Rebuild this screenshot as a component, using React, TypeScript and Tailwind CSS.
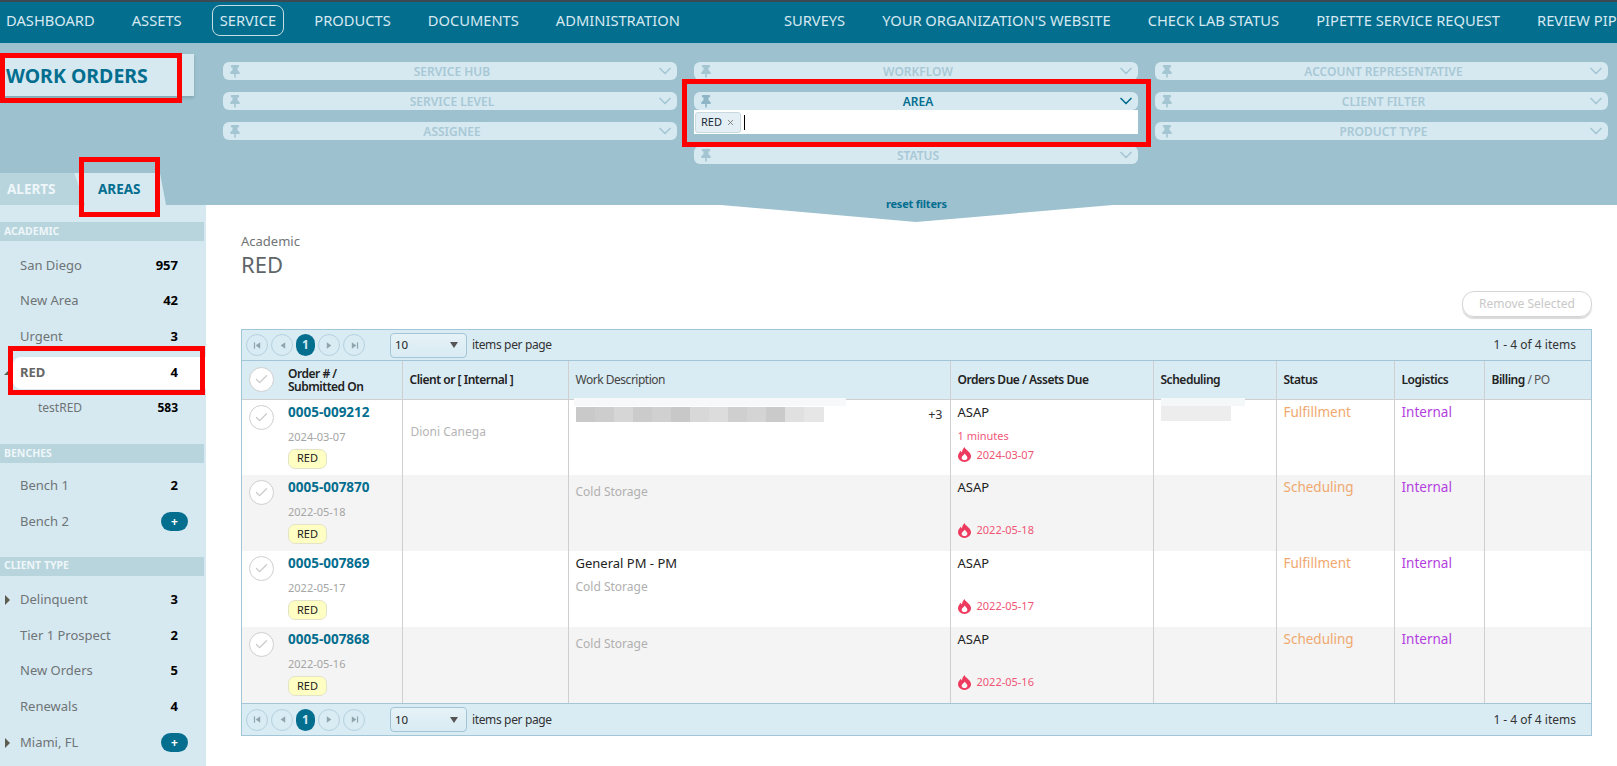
import { ChevronDown, Check, X } from "lucide-react"
import { FaThumbtack } from "react-icons/fa"

const navLeft = ["DASHBOARD", "ASSETS", "SERVICE", "PRODUCTS", "DOCUMENTS", "ADMINISTRATION"]
const navRight = ["SURVEYS", "YOUR ORGANIZATION'S WEBSITE", "CHECK LAB STATUS", "PIPETTE SERVICE REQUEST", "REVIEW PIPETTE"]

const Filter = ({ label, active }: { label: string; active?: boolean }) => (
  <div className="flex h-[18px] items-center rounded-[6px] bg-[#d6e9f1] pl-[7px] pr-[2px]">
    <FaThumbtack className={`h-[13px] w-[10px] ${active ? "text-[#8db5c6]" : "text-[#a4c6d3]"}`} />
    <span className={`flex-1 pl-[9px] pt-[1px] text-center text-[12px] font-semibold leading-none ${active ? "text-[#046e8f]" : "text-[#a8c8d5]"}`}>{label}</span>
    <ChevronDown className={`-my-[4px] h-[20px] w-[20px] ${active ? "text-[#046e8f]" : "text-[#a4c6d3]"}`} strokeWidth={2} />
  </div>
)

const SectionHeader = ({ label }: { label: string }) => (
  <div className="mr-[2px] flex h-[19px] items-center bg-[#b8d5dd] pl-[4px] text-[10.5px] font-bold text-[#eef6f9]">{label}</div>
)

const SideRow = ({ label, count, arrow, plus }: { label: string; count?: string; arrow?: boolean; plus?: boolean }) => (
  <div className="relative flex h-[35.75px] items-center pl-[20px] pr-[28px] text-[13px] text-[#6f7476]">
    {arrow && <span className="absolute left-[5px] h-0 w-0 border-y-[5px] border-l-[5px] border-y-transparent border-l-[#5d5d50]" />}
    <span className="flex-1">{label}</span>
    {plus ? (
      <span className="-mr-[10px] flex h-[19px] w-[27px] items-center justify-center rounded-full bg-[#046e8f] text-[12px] font-bold leading-none text-white">+</span>
    ) : (
      <span className="text-[13px] font-bold text-black">{count}</span>
    )}
  </div>
)

const CircleCheck = () => (
  <span className="flex h-[25px] w-[25px] shrink-0 items-center justify-center rounded-full border border-[#cfcfcf] bg-white">
    <Check className="h-[15px] w-[15px] text-[#c9c9c9]" strokeWidth={2} />
  </span>
)

const Flame = () => (
  <svg viewBox="0 0 14 16" className="h-[15px] w-[13px] text-[#ee3a5e]">
    <path
      fill="currentColor"
      fillRule="evenodd"
      d="M7 0C7.500 2 9 2.500 11 4.500 13 6.300 14 8 14 10 14 13.300 10.900 16 7 16 3.100 16 0 13.300 0 10 0 7.500 1.500 5.500 3 4 3.300 5 3.700 5.500 4.300 5.800 4.500 3.500 5.500 1.500 7 0ZM7.300 6.800C6.800 8.500 3.900 9.400 3.900 11.400 3.900 13 5.300 14 7 14 8.700 14 10.100 13 10.100 11.400 10.100 9.400 7.800 8.500 7.300 6.800Z"
    />
  </svg>
)

const PagerIcon = ({ dir, bar }: { dir: "l" | "r"; bar?: boolean }) => (
  <span className="flex h-[22px] w-[22px] items-center justify-center rounded-full border border-[#b4d2df]">
    <svg viewBox="0 0 10 10" className="h-[9px] w-[9px] text-[#8fa5ae]">
      {dir === "l" ? <path fill="currentColor" d="M8 1.500v7L3 5z" /> : <path fill="currentColor" d="M2 1.500v7L7 5z" />}
      {bar && (dir === "l" ? <rect x="1" y="1.500" width="1.300" height="7" fill="currentColor" /> : <rect x="7.700" y="1.500" width="1.300" height="7" fill="currentColor" />)}
    </svg>
  </span>
)

const Pager = ({ className }: { className: string }) => (
  <div className={`flex items-center bg-[#d9ebf3] pl-[4px] pr-[15px] ${className}`}>
    <div className="flex items-center gap-[3px]">
      <PagerIcon dir="l" bar />
      <PagerIcon dir="l" />
      <span className="flex h-[22px] w-[19px] items-center justify-center rounded-full bg-[#046e8f] text-[12px] font-bold text-[#d6e9f1]">1</span>
      <PagerIcon dir="r" />
      <PagerIcon dir="r" bar />
    </div>
    <div className="ml-[25px] flex h-[25px] w-[77px] items-center justify-between rounded-[4px] border border-[#a2c6d8] bg-gradient-to-b from-[#e6f2f7] to-[#d9ebf3] pl-[4px] pr-[8px] text-[11.5px] text-[#222]">
      10
      <span className="h-0 w-0 border-x-[4px] border-t-[6px] border-x-transparent border-t-[#555]" />
    </div>
    <span className="ml-[5px] flex-1 text-[12px] tracking-[-0.03em] text-[#333]">items per page</span>
    <span className="text-[12px] text-[#333]">1 - 4 of 4 items</span>
  </div>
)

interface Order {
  id: string
  date: string
  client?: string
  title?: string
  desc?: string
  minutes?: string
  status: string
  blurred?: boolean
}

const orders: Order[] = [
  { id: "0005-009212", date: "2024-03-07", client: "Dioni Canega", minutes: "1 minutes", status: "Fulfillment", blurred: true },
  { id: "0005-007870", date: "2022-05-18", desc: "Cold Storage", status: "Scheduling" },
  { id: "0005-007869", date: "2022-05-17", title: "General PM - PM", desc: "Cold Storage", status: "Fulfillment" },
  { id: "0005-007868", date: "2022-05-16", desc: "Cold Storage", status: "Scheduling" },
]

const blurSteps = ["bg-[#c9c9c9]", "bg-[#cdcdcd]", "bg-[#d6d6d6]", "bg-[#cbcbcb]", "bg-[#d0d0d0]", "bg-[#c8c8c8]", "bg-[#d8d8d8]", "bg-[#dcdcdc]", "bg-[#cfcfcf]", "bg-[#d4d4d4]", "bg-[#cacaca]", "bg-[#e0e0e0]", "bg-[#e6e6e6]"]

const App = () => {
  return (
    <div className="relative h-[766px] w-full overflow-hidden bg-white font-['Noto_Sans',sans-serif]">
      {/* Top nav */}
      <nav className="flex h-[43px] items-center overflow-hidden whitespace-nowrap border-t-2 border-[#3b4a52] bg-[#046e8f] pb-[4px] pl-[6px] text-[14.7px] text-[#d6e9f1]">
        <div className="flex items-center gap-[37px]">
          {navLeft.map((n) =>
            n === "SERVICE" ? (
              <span key={n} className="-mx-[7px] rounded-[8px] border border-[#c5dde6] px-[7px] py-[3px]">{n}</span>
            ) : (
              <span key={n}>{n}</span>
            )
          )}
        </div>
        <div className="ml-[104px] flex items-center gap-[37px]">
          {navRight.map((n) => (
            <span key={n}>{n}</span>
          ))}
        </div>
      </nav>

      {/* Filter band */}
      <div className="flex h-[162px] bg-[#9dc1cf]">
        <div className="flex w-[223px] shrink-0 flex-col justify-between pt-[11px]">
          <div className="flex h-[42px] w-[194px] items-center bg-[#d6e9f1] pl-[6px] pt-[1px] text-[19.5px] font-bold text-[#046e8f] shadow-[0_2px_3px_rgba(0,0,0,0.15)]">
            WORK ORDERS
          </div>
          <div className="flex h-[32px] text-[13.5px] font-bold">
            <div className="flex w-[85px] items-center bg-[#b8d5dd] pl-[7px] text-[#eef6f9] [clip-path:polygon(0_0,74px_0,85px_100%,0_100%)]">ALERTS</div>
            <div className="-ml-[11px] flex w-[92px] items-center bg-[#d6e9f1] pl-[24px] text-[#046e8f] [clip-path:polygon(0_0,86px_0,92px_100%,11px_100%)]">AREAS</div>
          </div>
        </div>
        <div className="grid grid-cols-[454px_444px_453px] items-start gap-x-[17px] pt-[19px]">
          <div className="flex flex-col gap-[12px]">
            <Filter label="SERVICE HUB" />
            <Filter label="SERVICE LEVEL" />
            <Filter label="ASSIGNEE" />
          </div>
          <div className="flex flex-col">
            <Filter label="WORKFLOW" />
            <div className="mt-[12px]">
              <Filter label="AREA" active />
              <div className="flex h-[24px] items-center bg-white pl-[1px]">
                <span className="flex h-[21px] items-center gap-[4px] rounded-[3px] border border-[#c9d9e0] bg-[#e3eff4] px-[5px] text-[11px] text-[#1c2b3a]">
                  RED
                  <X className="h-[9px] w-[9px] text-[#666]" strokeWidth={2} />
                </span>
                <span className="ml-[3px] h-[15px] w-px bg-black" />
              </div>
            </div>
            <div className="mt-[12px]">
              <Filter label="STATUS" />
            </div>
          </div>
          <div className="flex flex-col gap-[12px]">
            <Filter label="ACCOUNT REPRESENTATIVE" />
            <Filter label="CLIENT FILTER" />
            <Filter label="PRODUCT TYPE" />
          </div>
        </div>
      </div>

      {/* Body */}
      <div className="flex h-[561px]">
        <aside className="w-[206px] shrink-0 bg-[#d6e9f1] pt-[17px]">
          <SectionHeader label="ACADEMIC" />
          <div className="pt-[6.5px]">
            <SideRow label="San Diego" count="957" />
            <SideRow label="New Area" count="42" />
            <SideRow label="Urgent" count="3" />
            <div className="flex h-[35.75px] items-center">
              <div className="relative ml-[13px] flex h-[32px] flex-1 items-center rounded-l-[8px] bg-white pl-[7px] pr-[28px] text-[13px] font-bold text-[#666]">
                <span className="absolute -left-[9px] h-0 w-0 border-b-[5px] border-l-[5px] border-b-[#5d5d50] border-l-transparent" />
                <span className="flex-1">RED</span>
                <span className="text-[13px] font-bold text-black">4</span>
              </div>
            </div>
            <div className="flex h-[35.75px] items-center pl-[38px] pr-[28px] text-[12px] text-[#6f7476]">
              <span className="flex-1">testRED</span>
              <span className="font-bold text-black">583</span>
            </div>
          </div>
          <div className="mt-[18px]">
            <SectionHeader label="BENCHES" />
          </div>
          <div className="pt-[5px]">
            <SideRow label="Bench 1" count="2" />
            <SideRow label="Bench 2" plus />
          </div>
          <div className="mt-[17px]">
            <SectionHeader label="CLIENT TYPE" />
          </div>
          <div className="pt-[6px]">
            <SideRow label="Delinquent" count="3" arrow />
            <SideRow label="Tier 1 Prospect" count="2" />
            <SideRow label="New Orders" count="5" />
            <SideRow label="Renewals" count="4" />
            <SideRow label="Miami, FL" arrow plus />
          </div>
        </aside>

        <main className="flex-1 pl-[35px] pr-[25px] pt-[28px]">
          <div className="text-[13px] leading-[16px] text-[#6f7476]">Academic</div>
          <div className="mt-[1px] text-[22px] leading-[28px] text-[#5f6668]">RED</div>
          <div className="mt-[6px] flex justify-end">
            <button className="mt-[7px] flex h-[26px] w-[130px] items-center justify-center rounded-[12px] border border-[#d5d5d5] text-[12px] text-[#c8c8c8] shadow-[0_2px_1px_rgba(0,0,0,0.15)]">
              Remove Selected
            </button>
          </div>

          <div className="mt-[12px] border border-[#a2c6d8]">
            <Pager className="h-[31px] border-b border-[#a2c6d8]" />
            <table className="w-full table-fixed border-collapse text-[12px]">
              <colgroup>
                <col className="w-[160px]" />
                <col className="w-[166px]" />
                <col className="w-[382px]" />
                <col className="w-[203px]" />
                <col className="w-[123px]" />
                <col className="w-[118px]" />
                <col className="w-[90px]" />
                <col className="w-[107px]" />
              </colgroup>
              <thead>
                <tr className="h-[38px] border-b border-[#cfcfcf] bg-[#d9ebf3] text-left leading-[13px] tracking-[-0.04em] text-[#222]">
                  <th className="pl-[7px] font-semibold">
                    <div className="flex items-center gap-[14px]">
                      <CircleCheck />
                      <span>Order # /<br />Submitted On</span>
                    </div>
                  </th>
                  <th className="border-l border-[#cfcfcf] pl-[7px] font-semibold">Client or [ Internal ]</th>
                  <th className="border-l border-[#cfcfcf] pl-[7px] font-normal text-[#444]">Work Description</th>
                  <th className="border-l border-[#cfcfcf] pl-[7px] font-semibold">Orders Due / Assets Due</th>
                  <th className="border-l border-[#cfcfcf] pl-[7px] font-semibold">Scheduling</th>
                  <th className="border-l border-[#cfcfcf] pl-[7px] font-semibold">Status</th>
                  <th className="border-l border-[#cfcfcf] pl-[7px] font-semibold">Logistics</th>
                  <th className="border-l border-[#cfcfcf] pl-[7px] font-semibold">
                    Billing <span className="font-normal text-[#555]">/ PO</span>
                  </th>
                </tr>
              </thead>
              <tbody>
                {orders.map((o, i) => (
                  <tr key={o.id} className={`h-[76px] align-top ${i % 2 === 1 ? "bg-[#f4f4f4]" : "bg-white"}`}>
                    <td className="pl-[7px] pt-[5px]">
                      <div className="flex gap-[14px]">
                        <CircleCheck />
                        <div className="-mt-[1px] flex flex-col items-start">
                          <span className="text-[13.5px] font-bold leading-[16px] text-[#046e8f]">{o.id}</span>
                          <span className="mt-[9px] text-[11px] leading-[16px] text-[#a5a5a5]">{o.date}</span>
                          <span className="mt-[4px] flex h-[20px] items-center rounded-[7px] border border-[#e3e3c8] bg-[#ffffc4] px-[8px] text-[11px] text-[#222]">RED</span>
                        </div>
                      </div>
                    </td>
                    <td className="border-l border-[#cfcfcf] pl-[8px] pt-[24px] text-[12px] leading-[16px] text-[#b5b5b5]">{o.client}</td>
                    <td className="border-l border-[#cfcfcf] pl-[7px]">
                      {o.blurred ? (
                        <div className="relative pr-[7px] pt-[6px]">
                          <div className="absolute -left-[2px] -top-[2px] h-[8px] w-[272px] bg-[#f6f8f9]" />
                          <div className="flex items-center justify-between">
                            <div className="flex h-[15px] w-[248px]">
                              {blurSteps.map((c, k) => (
                                <span key={k} className={`flex-1 ${c}`} />
                              ))}
                            </div>
                            <span className="text-[12.5px] text-[#333]">+3</span>
                          </div>
                        </div>
                      ) : o.title ? (
                        <div className="pt-[3px]">
                          <div className="text-[13px] leading-[18px] text-[#222]">{o.title}</div>
                          <div className="mt-[7px] text-[12px] leading-[16px] text-[#b0b0b0]">{o.desc}</div>
                        </div>
                      ) : (
                        <div className="pt-[9px] text-[12px] leading-[16px] text-[#b0b0b0]">{o.desc}</div>
                      )}
                    </td>
                    <td className="border-l border-[#cfcfcf] pl-[7px] pt-[3px]">
                      <div className="text-[13px] leading-[18px] text-[#222]">ASAP</div>
                      <div className="mt-[7px] h-[16px] text-[11px] leading-[16px] text-[#f0577a]">{o.minutes}</div>
                      <div className="mt-[3px] flex items-center gap-[6px] text-[11px] leading-[16px] text-[#ef5474]">
                        <Flame />
                        {o.date}
                      </div>
                    </td>
                    <td className="border-l border-[#cfcfcf] pl-[7px]">
                      {o.blurred && (
                        <div className="relative pt-[6px]">
                          <div className="absolute -top-[2px] left-0 h-[8px] w-[84px] bg-[#f5f8f9]" />
                          <div className="h-[15px] w-[70px] bg-[#ededed]" />
                        </div>
                      )}
                    </td>
                    <td className="border-l border-[#cfcfcf] pl-[7px] pt-[3px] text-[13.5px] leading-[18px] text-[#f0a86e]">{o.status}</td>
                    <td className="border-l border-[#cfcfcf] pl-[7px] pt-[3px] text-[13.5px] leading-[18px] text-[#b33ee0]">Internal</td>
                    <td className="border-l border-[#cfcfcf]" />
                  </tr>
                ))}
              </tbody>
            </table>
            <Pager className="h-[32px] border-t border-[#a2c6d8]" />
          </div>
        </main>
      </div>

      {/* Reset filters tab hangs over the page */}
      <svg viewBox="0 0 392 17" preserveAspectRatio="none" className="absolute left-[721px] top-[205px] h-[17px] w-[392px] text-[#9dc1cf]">
        <path fill="currentColor" d="M0 0h392L195 17z" />
      </svg>
      <span className="absolute left-[886px] top-[196px] text-[11px] font-bold tracking-[-0.02em] text-[#046e8f]">reset filters</span>

      {/* Red highlight annotations */}
      <div className="absolute left-0 top-[53px] h-[50px] w-[182px] border-[5px] border-[#ff0000]" />
      <div className="absolute left-[79px] top-[157px] h-[60px] w-[81px] border-[5px] border-[#ff0000]" />
      <div className="absolute left-[682px] top-[79px] h-[68px] w-[469px] border-[5px] border-[#ff0000]" />
      <div className="absolute left-[8px] top-[346px] h-[49px] w-[197px] border-[5px] border-[#ff0000]" />
    </div>
  )
}

export default App
